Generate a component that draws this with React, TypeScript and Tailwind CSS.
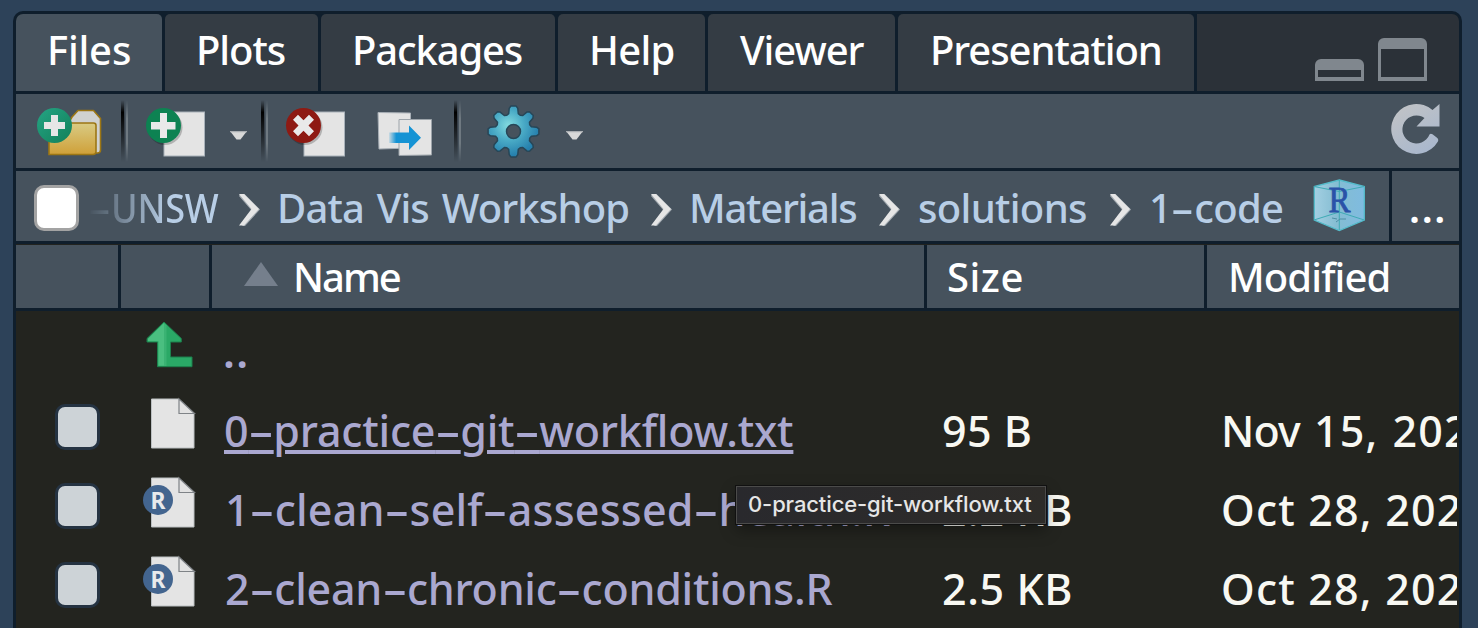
import type { ReactNode } from 'react';

const tabs = [
  { label: 'Files', cls: 'w-[146px] pl-[31px] bg-[#46525d] h-20 tracking-[-0.2px]' },
  { label: 'Plots', cls: 'w-[153px] pl-[31px] bg-[#343c44] tracking-[-1.05px]' },
  { label: 'Packages', cls: 'w-[234px] pl-[31px] bg-[#343c44] tracking-[-1.15px]' },
  { label: 'Help', cls: 'w-[147px] pl-[31px] bg-[#343c44] tracking-[-0.75px]' },
  { label: 'Viewer', cls: 'w-[187px] pl-[32px] bg-[#343c44] tracking-[-1.05px]' },
  { label: 'Presentation', cls: 'w-[296px] pl-[32px] bg-[#343c44] tracking-[-1.08px]' },
];

function Hyphen({ underlined = false }: { underlined?: boolean }) {
  return (
    <span
      className={
        underlined
          ? 'mx-[0.129em] inline-block scale-x-[1.85] tracking-normal underline decoration-[4px] underline-offset-[3px]'
          : 'mx-[0.129em] inline-block scale-x-[1.8] tracking-normal'
      }
    >
      -
    </span>
  );
}

function Hyphenated({ text, underlined = false }: { text: string; underlined?: boolean }) {
  return (
    <>
      {text.split('-').map((part, i) => (
        <span key={i}>
          {i > 0 && <Hyphen underlined={underlined} />}
          {part}
        </span>
      ))}
    </>
  );
}

function Separator() {
  return (
    <div className="flex h-[62px] w-[8px] shrink-0">
      <div className="w-[3px] bg-linear-to-b from-transparent via-black to-transparent from-0% via-20% to-100%" />
      <div className="w-px bg-[#2a3037]/60 [mask-image:linear-gradient(transparent,black_30%,black_70%,transparent)]" />
      <div className="ml-px w-[2px] bg-[#6f7981] [mask-image:linear-gradient(transparent,black_30%,black_70%,transparent)]" />
    </div>
  );
}

function Caret() {
  return (
    <svg className="h-[74px] w-[21px] shrink-0" viewBox="0 0 21 74">
      <path d="M2 37h17l-6.500 8.500h-4z" fill="#d9d9d9" />
      <path d="M2 37h17v1.200h-17z" fill="#aaaeb2" />
    </svg>
  );
}

function FolderIcon() {
  return (
    <svg className="h-[74px] w-[68px] shrink-0" viewBox="36 94 68 74">
      <defs>
        <linearGradient id="folder" x1="0" y1="0" x2="0" y2="1">
          <stop offset="0" stopColor="#d9cb84" />
          <stop offset="1" stopColor="#cfa038" />
        </linearGradient>
        <linearGradient id="teal" x1="0" y1="0" x2="1" y2="1">
          <stop offset="0" stopColor="#25a484" />
          <stop offset="1" stopColor="#118059" />
        </linearGradient>
      </defs>
      <path d="M68 124l4-7 6-6.500h15.500l7 8v31.500q0 3-3 3h-5z" fill="#d0d1d0" stroke="#9c7614" strokeWidth="1.600" strokeLinejoin="round" />
      <path d="M49 123h44.500q2.500 0 2.500 2.500v26q0 3-3 3h-44z" fill="url(#folder)" stroke="#9c7614" strokeWidth="1.600" />
      <circle cx="54.500" cy="125.500" r="17.500" fill="url(#teal)" />
      <path d="M51 115h7v7h7v7h-7v7h-7v-7h-7v-7h7z" fill="#e6e6e6" />
    </svg>
  );
}

function BadgeFile({ kind }: { kind: 'add' | 'remove' }) {
  return (
    <svg className="h-[74px] w-[65px] shrink-0" viewBox="145 94 65 74">
      <rect x="164" y="112" width="40.500" height="44" fill="#e4e4e4" stroke="#a9b2ba" strokeWidth="1" />
      <circle cx="165" cy="127.500" r="17.500" fill="#000" opacity=".22" />
      {kind === 'add' ? (
        <>
          <circle cx="163.500" cy="125.500" r="17.500" fill="#0d8252" />
          <path d="M160 113h7v9h8.500v7.500h-8.500v8.500h-7v-8.500h-9v-7.500h9z" fill="#e9e9e9" />
        </>
      ) : (
        <>
          <circle cx="163.500" cy="125.500" r="17.500" fill="#8e1a13" />
          <path d="M153 119.700l5-5 5.500 5.500 5.500-5.500 5 5-5.500 5.800 5.500 5.800-5 5-5.500-5.500-5.500 5.500-5-5 5.500-5.800z" fill="#e9e9e9" />
        </>
      )}
    </svg>
  );
}

function MoveIcon() {
  return (
    <svg className="h-[74px] w-[58px] shrink-0" viewBox="376 94 58 74">
      <defs>
        <linearGradient id="arrow" gradientUnits="userSpaceOnUse" x1="388" x2="421" y1="0" y2="0">
          <stop offset="0" stopColor="#1593d4" stopOpacity="0" />
          <stop offset=".25" stopColor="#1593d4" />
        </linearGradient>
      </defs>
      <path d="M378 112.500l32.500.5v35l-31.500 1z" fill="#e4e4e4" stroke="#a9b0b7" strokeWidth="1" />
      <path d="M399 119.500h32.500v35.500l-32.500.5z" fill="#e4e4e4" stroke="#9da4aa" strokeWidth="1" />
      <path d="M389 132.500h20v-7l12 12.300-12 12.300v-7h-20z" fill="url(#arrow)" />
    </svg>
  );
}

function gearPath(cx: number, cy: number) {
  const points: string[] = [];
  for (let i = 0; i < 8; i++) {
    for (const [deg, r] of [[-15, 18.5], [-10.5, 23.5], [-6, 25.5], [6, 25.5], [10.5, 23.5], [15, 18.5], [22.5, 17.5]]) {
      const a = ((i * 45 + deg) * Math.PI) / 180;
      points.push(`${(cx + r * Math.sin(a)).toFixed(1)} ${(cy - r * Math.cos(a)).toFixed(1)}`);
    }
  }
  return `M${points.join('L')}Z`;
}

function GearIcon() {
  const ring = `${gearPath(513.5, 131.5)}M520.5 131.500a7 7 0 1 0-14 0a7 7 0 1 0 14 0Z`;
  return (
    <svg className="h-[74px] w-[58px] shrink-0" viewBox="484 94 58 74">
      <defs>
        <radialGradient id="gear" cx=".4" cy=".38" r=".6">
          <stop offset="0" stopColor="#83dbe0" />
          <stop offset=".5" stopColor="#4aabc6" />
          <stop offset="1" stopColor="#2680ad" />
        </radialGradient>
      </defs>
      <path d={ring} fillRule="evenodd" fill="url(#gear)" stroke="#274657" strokeWidth="1.500" strokeLinejoin="round" />
    </svg>
  );
}

function RefreshIcon() {
  return (
    <svg className="h-[74px] w-[56px] shrink-0" viewBox="1388 94 56 74">
      <defs>
        <linearGradient id="refresh" x1="0" y1="0" x2=".6" y2="1">
          <stop offset="0" stopColor="#c3c4c5" />
          <stop offset="1" stopColor="#aab8cd" />
        </linearGradient>
      </defs>
      <path
        d="M1439.500 104v22.500h-23l8-8.500a14 14 0 1 0 5 16.500q1-1.500 3-.300l4.800 3.800q1.500 1.500.6 3.500a25 25 0 1 1-5.400-31.500z"
        fill="url(#refresh)"
      />
    </svg>
  );
}

function ProjectIcon() {
  return (
    <svg className="h-[70px] w-[58px] shrink-0" viewBox="1310 171 58 70">
      <defs>
        <linearGradient id="cube" x1="0" y1="0" x2="1" y2="0">
          <stop offset="0" stopColor="#a3cfe2" />
          <stop offset=".45" stopColor="#84bdd2" />
          <stop offset="1" stopColor="#7fbbe0" />
        </linearGradient>
      </defs>
      <path d="M1339.300 180l25 6.500v33.500l-25 10.500-25-10.500v-33.500z" fill="url(#cube)" stroke="#55bccb" strokeWidth="1.300" />
      <path d="M1314 186.500l25.300 5 25-5M1314 220l25.300-8 25 8M1339.300 180v50" fill="none" stroke="#3fabb5" strokeWidth="1" />
      <path d="M1332 218l5 1m-1 3l4-3h6" fill="none" stroke="#4f8fa6" strokeWidth="1" />
      <text x="1328.500" y="211.500" fontSize="36" textLength="22" lengthAdjust="spacingAndGlyphs" fill="#2a52a8" stroke="#2a52a8" strokeWidth=".8" className="font-['Liberation_Serif',serif] font-normal">R</text>
    </svg>
  );
}

function Chevron() {
  return (
    <svg className="h-[70px] w-[24px] shrink-0" viewBox="237 171 24 70">
      <path d="M239 196l1-2h4.500l15.500 15.500-15 16.500h-3l10-15z" fill="#a3abb1" />
      <path d="M239 194h5l15 15-15 16.500h-5l12.500-16.500z" fill="#e6e6e6" />
    </svg>
  );
}

function Crumb({ children, cls }: { children: ReactNode; cls: string }) {
  return <div className={`shrink-0 whitespace-nowrap ${cls}`}>{children}</div>;
}

function FileIcon({ r = false }: { r?: boolean }) {
  return (
    <svg className="h-[79px] w-[56px] shrink-0" viewBox="142 388 56 79">
      <path d="M151.500 399h27.500l15 15v34h-42.500z" fill="#e4e4e4" stroke="#bcc0c2" strokeWidth="1" />
      <path d="M179 399v14.500h15.500z" fill="#e2e2e2" stroke="#7f8387" strokeWidth="1.200" />
      {r && (
        <>
          <circle cx="158" cy="421" r="15" fill="#43658f" />
          <text x="150.500" y="429.500" fontSize="23" fontWeight="700" textLength="15" lengthAdjust="spacingAndGlyphs" fill="#e8eaec" className="font-['Noto_Sans',sans-serif]">R</text>
        </>
      )}
    </svg>
  );
}

function UpIcon() {
  return (
    <svg className="h-[77px] w-[56px] shrink-0" viewBox="142 311 56 77">
      <path d="M164 322l17.300 16.500v3.500h-10.800v15h21.500v9.700h-34.500v-24.700h-10.500v-3.500z" fill="#2aa966" stroke="#1c7f4c" strokeWidth="1" />
      <path d="M164 323l-16 15.700v2.600h10.500v24.500h6z" fill="#4abf80" />
      <path d="M164 323v43h2.500v-40.500z" fill="#3ab373" />
    </svg>
  );
}

function FileRow({ icon, children, size, date }: { icon: ReactNode; children: ReactNode; size: ReactNode; date: ReactNode }) {
  return (
    <div className="flex h-[79px] shrink-0 leading-[85px]">
      <div className="mt-4 ml-[39px] h-[46px] w-[45px] shrink-0 rounded-[10px] border-[3px] border-[#253342] bg-[#cdd3d7]" />
      <div className="ml-[42px] flex shrink-0">{icon}</div>
      <div className="ml-[26px] w-[718px] shrink-0 text-[#aaa8d0]">{children}</div>
      <div className="w-[279px] shrink-0 text-[#f8f8f2]">{size}</div>
      <div className="w-[236px] shrink-0 overflow-hidden text-[#f8f8f2]">{date}</div>
    </div>
  );
}

export default function App() {
  return (
    <div className="relative h-[628px] w-[1478px] overflow-hidden bg-[#2d4259] pt-[11px] pl-[13px] font-['Noto_Sans','Open_Sans',sans-serif] text-[40px] font-medium whitespace-nowrap text-white">
      <div className="flex h-[617px] w-[1449px] flex-col overflow-hidden rounded-t-[10px] border-x-[3px] border-t-[3px] border-[#0f1e2c] bg-[#23241f]">
        <div className="flex h-20 shrink-0 gap-[3px] bg-[#0f1e2c] leading-[71px]">
          {tabs.map((t) => (
            <div key={t.label} className={`h-[77px] shrink-0 rounded-t-[5px] ${t.cls}`}>
              {t.label}
            </div>
          ))}
          <div className="flex h-[77px] flex-1 items-end gap-[14px] bg-[#2b3138] pb-[10px] pl-[118px]">
            <div className="h-[22px] w-[49px] rounded-t-[6px] border-x-[3px] border-t-[11px] border-b-4 border-[#80878e]" />
            <div className="h-[43px] w-[49px] rounded-t-[6px] border-x-[3px] border-t-[11px] border-b-4 border-[#80878e]" />
          </div>
        </div>

        <div className="flex h-[74px] shrink-0 items-center bg-[#46525d] pl-5">
          <FolderIcon />
          <div className="ml-[17px]"><Separator /></div>
          <div className="ml-4"><BadgeFile kind="add" /></div>
          <div className="ml-[18px]"><Caret /></div>
          <div className="ml-3"><Separator /></div>
          <div className="ml-4"><BadgeFile kind="remove" /></div>
          <div className="ml-[26px]"><MoveIcon /></div>
          <div className="ml-5"><Separator /></div>
          <div className="ml-[22px]"><GearIcon /></div>
          <div className="ml-[22px]"><Caret /></div>
          <div className="mr-[15px] ml-auto"><RefreshIcon /></div>
        </div>
        <div className="h-[3px] shrink-0 bg-[#0f1e2c]" />

        <div className="flex h-[70px] shrink-0 bg-[#46525d] leading-[73px] text-[#b8cee6]">
          <div className="mt-[14px] ml-[18px] h-[46px] w-[45px] shrink-0 rounded-[10px] border-[3px] border-[#a3a3a3] bg-white" />
          <Crumb cls="ml-[9px] w-[149px] h-[70px] [mask-image:linear-gradient(to_right,transparent,black_80px)]">
            <Hyphen />
            <span className="inline-block origin-left scale-x-[0.9] tracking-[-0.2px]">UNSW</span>
          </Crumb>
          <Chevron />
          <Crumb cls="ml-4 w-[372px] tracking-[-0.85px] [word-spacing:3.2px]">Data Vis Workshop</Crumb>
          <Chevron />
          <Crumb cls="ml-4 w-[188px] tracking-[-1.25px]">Materials</Crumb>
          <Chevron />
          <Crumb cls="ml-[17px] w-[190px] tracking-[-0.67px]">solutions</Crumb>
          <Chevron />
          <Crumb cls="ml-[17px] w-[161px] tracking-[-0.7px]"><Hyphenated text="1-code" /></Crumb>
          <ProjectIcon />
          <div className="ml-[21px] w-[3px] shrink-0 bg-[#0f1e2c]" />
          <div className="pl-[17px] font-semibold tracking-[1.6px] text-white">...</div>
        </div>
        <div className="h-[4px] shrink-0 border-b border-[#22231f] bg-[#0f1e2c]" />

        <div className="flex h-[63px] shrink-0 gap-[3px] bg-[#0f1e2c] leading-[63px]">
          <div className="w-[102px] shrink-0 bg-[#46525d]" />
          <div className="w-[88px] shrink-0 bg-[#46525d]" />
          <div className="flex w-[712px] shrink-0 bg-[#46525d] pl-8">
            <svg className="mt-[17px] mr-[15px] h-6 w-[34px]" viewBox="0 0 34 24">
              <path d="M17 0L34 24H0z" fill="#757f8c" />
            </svg>
            <span className="tracking-[-2px]">Name</span>
          </div>
          <div className="w-[277px] shrink-0 bg-[#46525d] pl-5 tracking-[0.5px]">Size</div>
          <div className="flex-1 bg-[#46525d] pl-[21px] tracking-[-0.9px]">Modified</div>
        </div>
        <div className="h-[3px] shrink-0 bg-[#0f1e2c]" />

        <div className="text-[43px]">
          <div className="flex h-[77px] leading-[81px] text-[#aaa8d0]">
            <div className="ml-[126px]"><UpIcon /></div>
            <span className="ml-[25px] font-semibold tracking-[1.5px]">..</span>
          </div>
          <FileRow
            icon={<FileIcon />}
            size={<span className="tracking-[0.5px]">95 B</span>}
            date={<><span className="tracking-[-0.9px]">Nov</span><span className="tracking-[1.1px] [word-spacing:2px]"> 15, 2022, 9:41 AM</span></>}
          >
            <span className="tracking-[-0.2px] underline decoration-[4px] underline-offset-[3px]">
              <Hyphenated text="0-practice-git-workflow.txt" underlined />
            </span>
          </FileRow>
          <FileRow
            icon={<FileIcon r />}
            size={<span className="tracking-[0.6px]">2.2 KB</span>}
            date={<span className="tracking-[1.2px]">Oct 28, 2022, 9:41 AM</span>}
          >
            <span className="ml-px tracking-[0.2px]"><Hyphenated text="1-clean-self-assessed-health.R" /></span>
          </FileRow>
          <FileRow
            icon={<FileIcon r />}
            size={<span className="tracking-[0.6px]">2.5 KB</span>}
            date={<span className="tracking-[1.2px]">Oct 28, 2022, 9:41 AM</span>}
          >
            <span className="ml-px tracking-[-0.24px]"><Hyphenated text="2-clean-chronic-conditions.R" /></span>
          </FileRow>
        </div>
      </div>

      <div className="absolute top-[486px] left-[736px] h-[38px] w-[310px] border border-[#4b4b4a] bg-linear-to-r from-[#29292d] to-[#2e2c29] pl-[11px] font-['Inter',sans-serif] text-[22px] leading-[35px] tracking-[-0.12px] text-[#e6e6e6] shadow-[0_0_0_1px_#111,0_6px_16px_rgba(0,0,0,0.35)]">
        0-practice-git-workflow.txt
      </div>
    </div>
  );
}
